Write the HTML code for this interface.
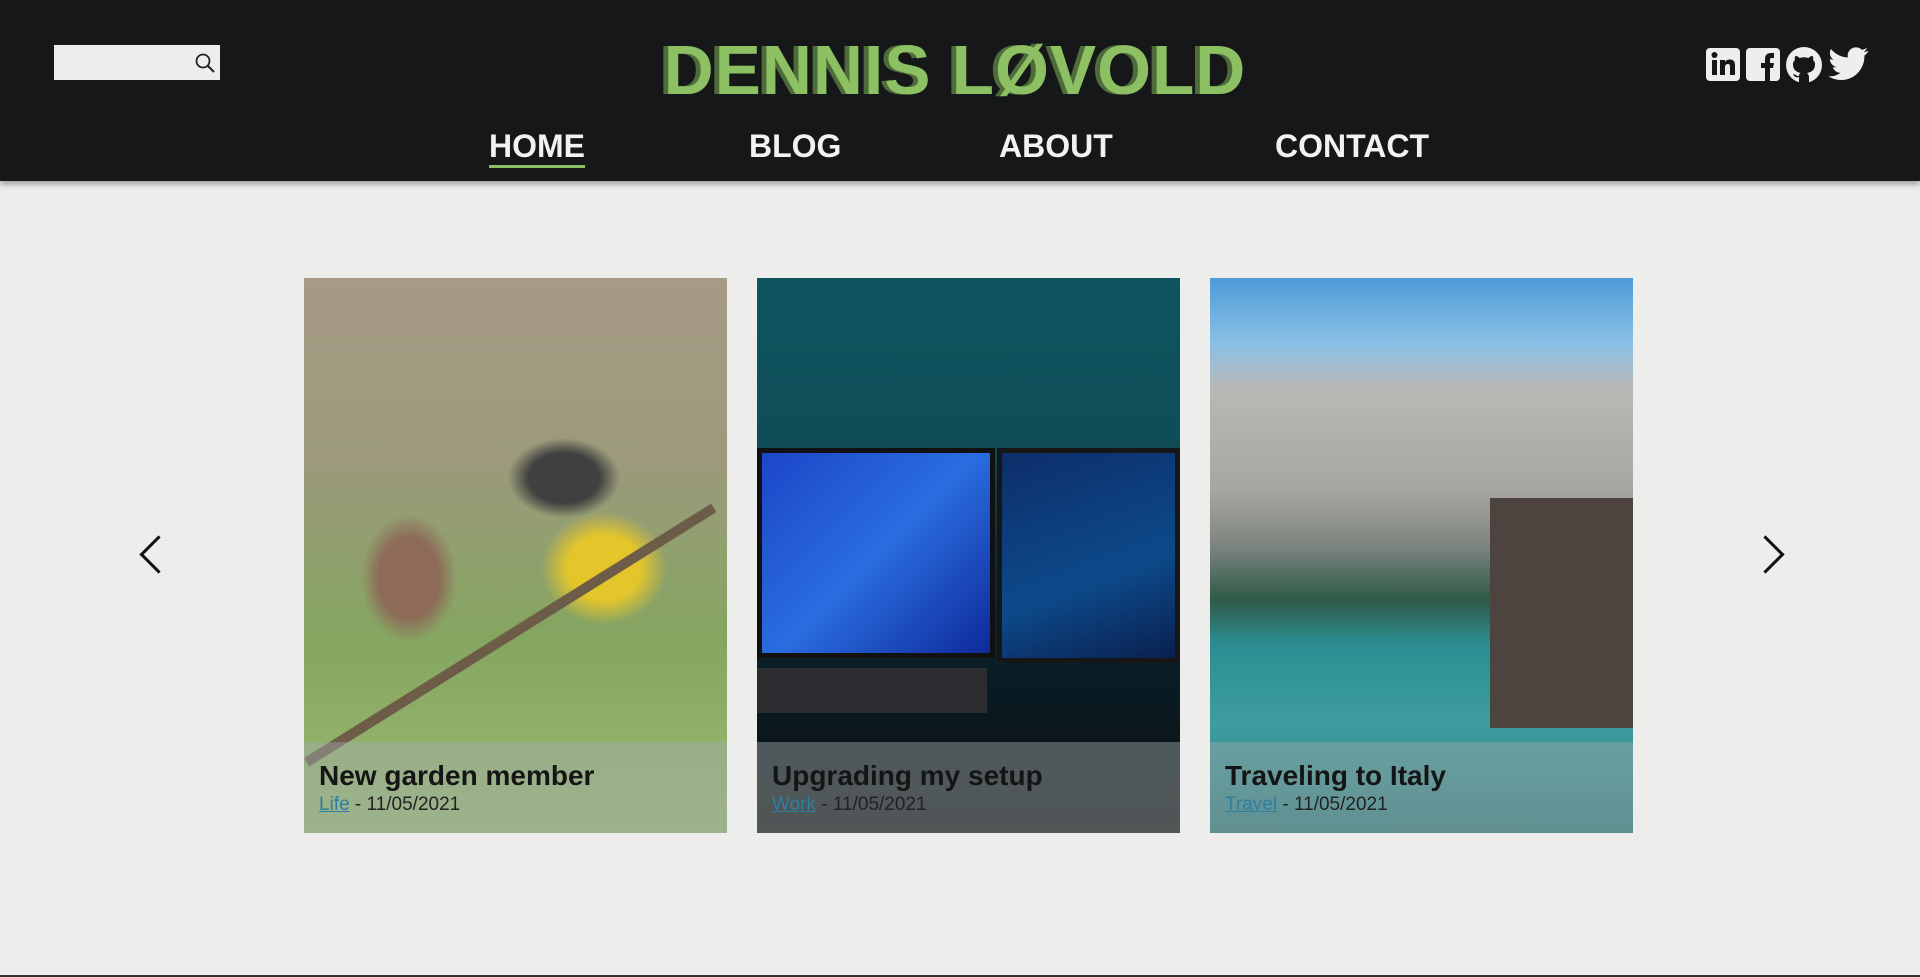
<!DOCTYPE html>
<html><head><style>
*{margin:0;padding:0;box-sizing:border-box}
body{width:1920px;height:977px;background:#ededeb;font-family:"Liberation Sans",sans-serif;position:relative;overflow:hidden}
header{position:absolute;left:0;top:0;width:1920px;height:181px;background:#161719;box-shadow:0 3px 6px rgba(0,0,0,.35)}
.search{position:absolute;left:54px;top:45px;width:166px;height:35px;background:#ededeb}
.logo{position:absolute;left:640px;top:30px;width:630px;text-align:center;font-size:70px;font-weight:bold;color:#8cc063;letter-spacing:1px;text-shadow:-5px 0 0 #4e6b3a;transform:scaleX(0.99)}
nav a{position:absolute;top:128px;font-size:32px;font-weight:bold;color:#f2f2f2;text-decoration:none}
.ul{position:absolute;left:489px;top:165px;width:96px;height:3px;background:#8cc063}
.icons{position:absolute;left:1705px;top:46px;display:flex;gap:4px}
.card{position:absolute;top:278px;width:423px;height:555px;overflow:hidden}
.cap{position:absolute;left:0;bottom:0;width:100%;height:91px;background:rgba(160,170,170,.45);padding:18px 15px}
.cap h2{font-size:28px;color:#151515;font-weight:bold}
.cap p{font-size:19px;color:#222;margin-top:2px}
.cap p span{color:#2f7ea0;text-decoration:underline}
.arrow{position:absolute;top:541px;width:27px;height:27px;border-left:3px solid #111;border-bottom:3px solid #111}
</style></head><body>
<header>
<div class="search"><svg style="position:absolute;right:4px;top:7px" width="22" height="22" viewBox="0 0 22 22"><circle cx="9" cy="9" r="6.5" fill="none" stroke="#222" stroke-width="1.8"/><line x1="14" y1="14" x2="20" y2="20" stroke="#222" stroke-width="2"/></svg></div>
<div class="logo">DENNIS LØVOLD</div>
<nav><a style="left:489px">HOME</a><a style="left:749px">BLOG</a><a style="left:999px">ABOUT</a><a style="left:1275px">CONTACT</a></nav>
<div class="ul"></div>
<div class="icons">
<svg width="36" height="36" viewBox="0 0 36 36"><rect x="1" y="2" width="34" height="33" rx="4" fill="#eee"/><rect x="7" y="14" width="5" height="15" fill="#161719"/><circle cx="9.5" cy="9" r="3" fill="#161719"/><path d="M15 14h5v2c1-2 3-2.5 5-2.5 4 0 5 2.5 5 6V29h-5v-8c0-2-.5-3-2-3s-3 1-3 3v8h-5z" fill="#161719"/></svg>
<svg width="36" height="36" viewBox="0 0 36 36"><rect x="1" y="2" width="34" height="33" rx="4" fill="#eee"/><path d="M20 35V22h-4v-5h4v-4c0-4 2-6 6-6h3v5h-2c-1.5 0-2 .5-2 2v3h4l-1 5h-3v13z" fill="#161719"/></svg>
<svg width="38" height="38" viewBox="0 0 38 38"><circle cx="19" cy="19" r="18" fill="#eee"/><path d="M14 37v-6c-4 1-5-1-6-3 2 0 3 2 6 2 0-2 1-3 2-3-5-1-8-3-8-9 0-2 1-3 2-4-.5-1-.5-3 .5-4 2 0 3 1 4 2 3-1 6-1 9 0 1-1 2-2 4-2 1 1 1 3 .5 4 1 1 2 2 2 4 0 6-3 8-8 9 1 1 2 2 2 4v6z" fill="#161719"/></svg>
<svg width="42" height="36" viewBox="0 0 42 36"><path d="M41 5c-1.5.7-3 1-4.5 1.2 1.6-1 2.8-2.5 3.4-4.3-1.5.9-3.2 1.6-5 2-1.5-1.6-3.6-2.5-6-2.5-4.5 0-8.2 3.7-8.2 8.2 0 .6 0 1.3.2 1.9C14 11.2 8 8 4 3c-.7 1.2-1.1 2.6-1.1 4.1 0 2.8 1.5 5.4 3.7 6.8-1.3 0-2.6-.4-3.7-1 0 4 2.8 7.3 6.6 8.1-1.2.3-2.5.4-3.7.1 1 3.3 4.1 5.7 7.7 5.7-3.4 2.7-7.8 4-12.1 3.5 3.7 2.4 8 3.7 12.6 3.7 15.1 0 23.4-12.5 23.4-23.4v-1c1.6-1.2 3-2.6 4.1-4.3z" fill="#eee"/></svg>
</div>
</header>
<div class="arrow" style="left:145px;transform:rotate(45deg)"></div>
<div class="arrow" style="left:1752px;transform:rotate(-135deg)"></div>

<div class="card" style="left:304px;background:radial-gradient(ellipse 90px 80px at 300px 290px,#e5c62a 40%,transparent 70%),radial-gradient(ellipse 70px 50px at 260px 200px,#3f4040 50%,transparent 80%),radial-gradient(ellipse 60px 80px at 105px 300px,#8d6b58 50%,transparent 80%),linear-gradient(180deg,#a79a86 0%,#9b9a7a 35%,#85a660 65%,#9cba72 100%)">
<div style="position:absolute;left:0;top:480px;width:480px;height:10px;background:#6d5c48;transform:rotate(-32deg);transform-origin:0 0"></div>
<div class="cap"><h2>New garden member</h2><p><span>Life</span> - 11/05/2021</p></div></div>

<div class="card" style="left:757px;background:linear-gradient(180deg,#0e5560 0%,#0f4e58 28%,#0c2d3a 50%,#0a1a22 75%,#111 100%)">
<div style="position:absolute;left:0;top:170px;width:238px;height:210px;background:linear-gradient(135deg,#1c46c8,#2a6de0 50%,#0e2a9a);border:5px solid #111"></div>
<div style="position:absolute;left:240px;top:170px;width:183px;height:215px;background:linear-gradient(160deg,#0d2e6a,#0d4a8a 60%,#0a2050);border:5px solid #161616"></div>
<div style="position:absolute;left:0;top:390px;width:230px;height:45px;background:#2a2c30"></div>
<div class="cap"><h2>Upgrading my setup</h2><p><span>Work</span> - 11/05/2021</p></div></div>

<div class="card" style="left:1210px;background:linear-gradient(180deg,#4d9cd8 0%,#8cc0e6 12%,#b8b8b4 20%,#a8a6a2 38%,#7f8580 48%,#2f5a48 58%,#2c8e92 66%,#3d9da0 80%,#2f7a7c 100%)">
<div style="position:absolute;left:280px;top:220px;width:143px;height:230px;background:#4d4440"></div>
<div class="cap"><h2>Traveling to Italy</h2><p><span>Travel</span> - 11/05/2021</p></div></div>

<div style="position:absolute;left:0;top:975px;width:1920px;height:2px;background:#333"></div>
</body></html>
